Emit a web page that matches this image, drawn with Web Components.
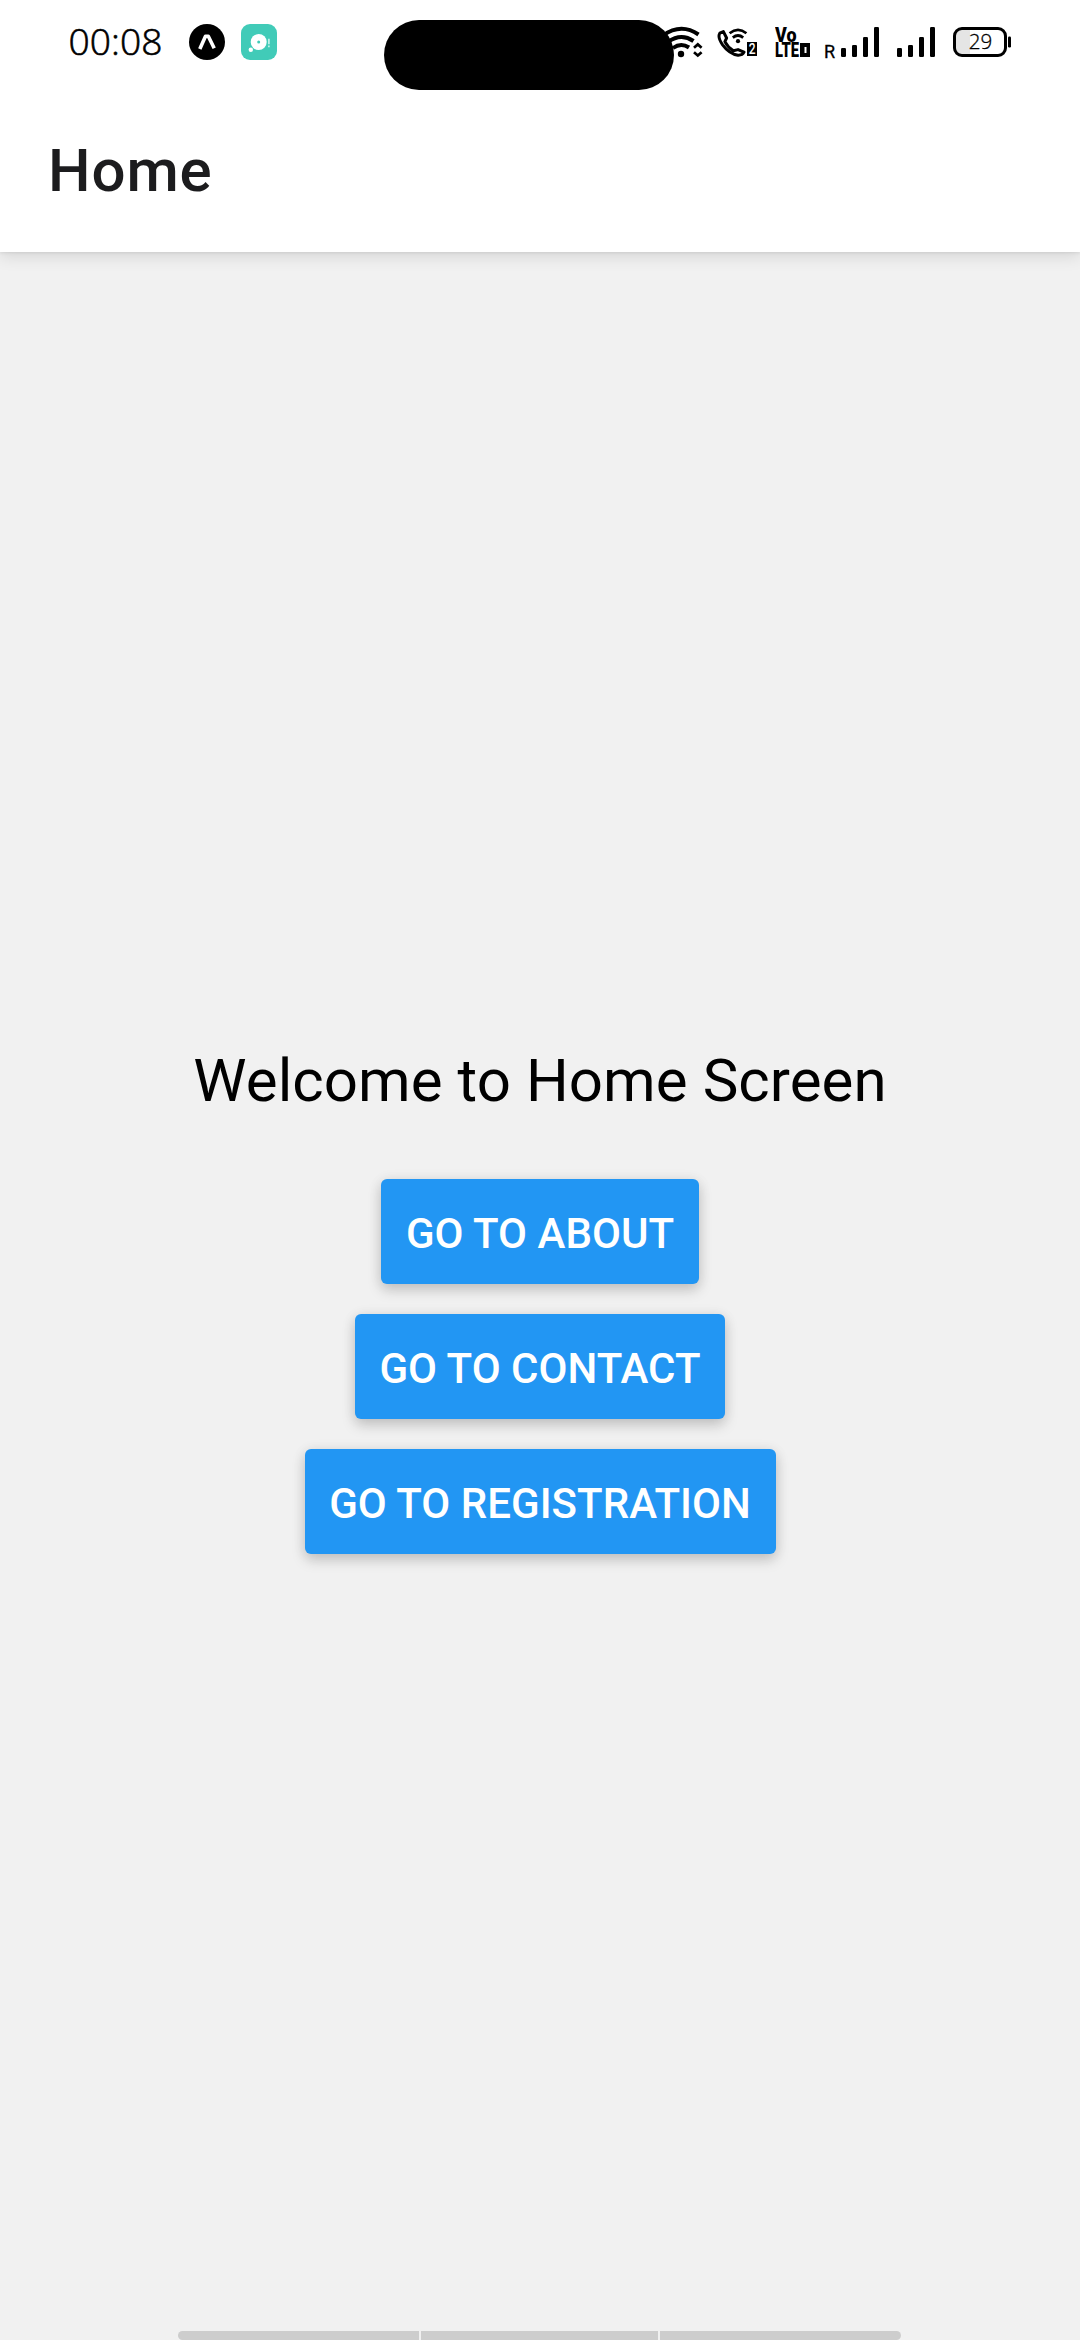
<!DOCTYPE html>
<html lang="en">
<head>
<meta charset="utf-8">
<title>Home</title>
<style>
html, body { margin: 0; padding: 0; }
body { font-family: Roboto, sans-serif; background: #f1f1f1; overflow: hidden; }
</style>
</head>
<body>
<app-screen>
  <status-bar slot="status" time="00:08" battery="29"></status-bar>
  <screen-header slot="header">Home</screen-header>
  <welcome-panel>
    <span slot="title">Welcome to Home Screen</span>
    <nav-button style="--w:318px">GO TO ABOUT</nav-button>
    <nav-button style="--w:370px">GO TO CONTACT</nav-button>
    <nav-button style="--w:471px">GO TO REGISTRATION</nav-button>
  </welcome-panel>
  <gesture-bar slot="footer"></gesture-bar>
</app-screen>
<script>
const define = (name, html, setup) => customElements.define(name, class extends HTMLElement {
  constructor() {
    super();
    this.attachShadow({ mode: 'open' }).innerHTML = html;
  }
  connectedCallback() { if (setup) setup(this); }
});

define('app-screen', `
<style>
:host { display: flex; flex-direction: column; width: 1080px; height: 2340px; background: #f1f1f1; }
.top { background: #fff; height: 252px; box-shadow: 0 4px 16px rgba(0,0,0,.12), 0 1px 3px rgba(0,0,0,.08); }
main { flex: 1; display: flex; flex-direction: column; }
</style>
<div class="top"><slot name="status"></slot><slot name="header"></slot></div>
<main><slot></slot></main>
<slot name="footer"></slot>`);

define('status-bar', `
<style>
:host { display: flex; position: relative; height: 90px; box-sizing: border-box; padding: 20px 0 0 68.6px; }
svg { display: block; flex: none; height: 44px; }
.time { width: 120.4px; font: 300 37.2px/42px "Open Sans", Roboto, sans-serif; -webkit-text-stroke: .6px #000; color: #000; }
.apps { display: flex; gap: 16px; flex: 1; }
.icons { display: flex; width: 419px; }
.bat { width: 59px; height: 44px; display: grid; margin-left: 18px; }
.bat > * { grid-area: 1 / 1; }
.pct { font: 300 20.6px/42px "Open Sans", Roboto, sans-serif; -webkit-text-stroke: .3px #000; text-align: center; width: 55px; color: #000; }
.roam { font: 400 18px/20px Roboto, sans-serif; -webkit-text-stroke: .3px #000; width: 17px; padding-top: 22px; color: #000; }
.pill { position: absolute; left: 384px; top: 20px; width: 290px; height: 70px; border-radius: 35px; background: #000; }
text { font-family: Roboto, sans-serif; font-weight: 900; }
</style>
<span class="time"></span>
<div class="apps">
  <svg width="36" viewBox="0 0 36 44"><circle cx="18" cy="22" r="18"/><path d="M10.8 29L16.5 16.2h2.8L25.2 28.2" fill="none" stroke="#fff" stroke-width="3.6" stroke-linejoin="round"/></svg>
  <svg width="36" viewBox="0 0 36 44"><rect y="4" width="36" height="36" rx="9" fill="#41cbb8"/><circle cx="17.7" cy="22" r="8" fill="#fff"/><circle cx="9.8" cy="29.8" r="2.2" fill="#fff"/><circle cx="17.7" cy="22" r="1.5" fill="#41cbb8"/><path d="M27.9 18.8v5.4M27.9 25.6v1.6" stroke="#d5f5f0" stroke-width="1.5"/></svg>
</div>
<div class="icons">
  <svg width="42" viewBox="661 20 42 44"><g fill="none" stroke="#000" stroke-width="4"><path d="M663 35.5Q681 22.5 698.5 34.5M668 42Q681 32.5 693.5 41M673 48Q681 42.2 689 47.5"/><path d="M694 47.7l3.8-3.3 3.8 3.3M694 52.2l3.8 3.3 3.8-3.3" stroke-width="2.7"/></g><circle cx="681" cy="54" r="3.2"/></svg>
  <svg width="42" style="margin-left:13px" viewBox="716 20 42 44"><g fill="none" stroke="#000"><path stroke-width="3" stroke-linejoin="round" d="M723.4 31.6L719.8 33.2C718 36 719.8 40.8 722.6 44.8C726.8 50.5 731.5 54.2 738 55.2C740.5 55.3 743 54.2 744 52.2L738 49.6L733.4 50.8C729.4 48.2 726.7 45.2 724.9 41.6L726.6 38Z"/><path stroke-width="2.7" d="M729.6 33.2Q738 26.6 746.4 33.2M732.8 37.6Q738 33.4 743.2 37.6"/></g><circle cx="738" cy="41.2" r="2.1"/><path d="M747 42h10v14h-10z"/><text x="748.7" y="54" font-size="14.5" textLength="6.8" lengthAdjust="spacingAndGlyphs" fill="#fff" style="font-weight:500">2</text></svg>
  <svg width="36" style="margin-left:17px" viewBox="775 20 36 44"><text x="775" y="42" font-size="19.3" textLength="21.5" lengthAdjust="spacingAndGlyphs">Vo</text><text x="775" y="57" font-size="19.3" textLength="24" lengthAdjust="spacingAndGlyphs">LTE</text><path fill-rule="evenodd" d="M800 43h10v14h-10zM804.5 47v6h2v-6z"/></svg>
  <span class="roam" style="margin-left:13px">R</span>
  <svg width="38" viewBox="841 20 38 44"><rect x="841" y="48" width="5" height="9" rx="1.2"/><rect x="852" y="45" width="5" height="12" rx="1.2"/><rect x="863" y="37" width="5" height="20" rx="1.2"/><rect x="874" y="27" width="5" height="30" rx="1.2"/></svg>
  <svg width="38" style="margin-left:18px" viewBox="841 20 38 44"><rect x="841" y="48" width="5" height="9" rx="1.2"/><rect x="852" y="45" width="5" height="12" rx="1.2"/><rect x="863" y="37" width="5" height="20" rx="1.2"/><rect x="874" y="27" width="5" height="30" rx="1.2"/></svg>
  <div class="bat"><svg width="59" viewBox="953 20 59 44"><path d="M970 29v26h-8q-7 0-7-7V36q0-7 7-7z" fill="#e5e5e5"/><rect x="954.5" y="28.5" width="51" height="27" rx="7.5" fill="none" stroke="#000" stroke-width="3"/><rect x="1008" y="36.5" width="3" height="11" rx="1.2"/></svg><span class="pct"></span></div>
</div>
<div class="pill"></div>`, el => {
  el.shadowRoot.querySelector('.time').textContent = el.getAttribute('time');
  el.shadowRoot.querySelector('.pct').textContent = el.getAttribute('battery');
});

define('screen-header', `
<style>
:host { display: block; height: 162px; padding: 45px 0 0 48px; box-sizing: border-box; font: 500 60px/72px Roboto, sans-serif; letter-spacing: .9px; color: #1c1c1e; }
</style><slot></slot>`);

define('welcome-panel', `
<style>
:host { display: flex; flex-direction: column; align-items: center; gap: 30px; padding-top: 794px; }
.title { font: 400 60px/70px Roboto, sans-serif; letter-spacing: .07px; color: #000; white-space: nowrap; margin-bottom: 33px; }
</style>
<div class="title"><slot name="title"></slot></div><slot></slot>`);

define('nav-button', `
<style>
:host { display: block; }
button { display: block; width: var(--w); height: 105px; padding: 4px 0 0; border: 0; border-radius: 6px; background: #2296f3; color: #fff;
  font: 500 42px/49px Roboto, sans-serif; letter-spacing: .04px; white-space: nowrap; box-shadow: 0 6px 14px rgba(0,0,0,.18), 0 1px 14px rgba(0,0,0,.07); }
</style><button><slot></slot></button>`);

define('gesture-bar', `
<style>
:host { display: flex; gap: 2px; height: 9px; width: 723px; margin-left: 178px; border-radius: 4.5px; overflow: hidden; }
i { background: #cdcdcd; }
i:nth-of-type(odd) { width: 241px; }
i:nth-of-type(2) { width: 237px; }
</style><i></i><i></i><i></i>`);
</script>
</body>
</html>
